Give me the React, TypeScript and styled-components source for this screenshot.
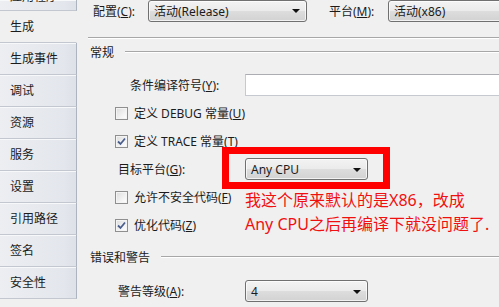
import React from 'react';
import styled, { createGlobalStyle } from 'styled-components';

const GlobalStyle = createGlobalStyle`
  html, body { margin: 0; padding: 0; background: #f0f0f0; overflow: hidden; }
  body {
    font-family: "Noto Sans", "Noto Sans CJK SC", sans-serif;
    font-size: 12px;
    color: #1b1b1b;
  }
`;

const Window = styled.div`
  display: flex;
  width: 499px;
  height: 307px;
  overflow: hidden;
  background: #f0f0f0;
`;

const TabList = styled.div`
  width: 77px;
  flex-shrink: 0;
  display: flex;
  flex-direction: column;
`;

const Tab = styled.div<{ $active?: boolean; $height?: number }>`
  height: ${(p) => p.$height ?? 31}px;
  flex-shrink: 0;
  display: flex;
  flex-direction: column;
  justify-content: center;
  overflow: hidden;
  padding-left: 10px;
  font-size: 12px;
  line-height: 16px;
  border-bottom: 1px solid #c3c8d0;
  border-right: 1px solid ${(p) => (p.$active ? 'transparent' : '#aeb4be')};
  background: ${(p) =>
    p.$active ? '#f0f0f0' : 'linear-gradient(to right, #eceef2, #e3e6ec 85%, #dde1e8)'};
  box-shadow: ${(p) => (p.$active ? 'none' : 'inset 0 1px 0 #f7f8fa')};
`;

/* the tab above "生成" is scrolled mostly out of view */
const ClippedTab = styled(Tab)`
  box-sizing: border-box;
  justify-content: flex-end;
  padding-bottom: 6px;
  line-height: 14px;
`;

const Content = styled.div`
  flex: 1;
  min-width: 0;
  display: flex;
  flex-direction: column;
  padding-left: 11px;
  overflow: hidden;
`;

const TopRow = styled.div`
  height: 23px;
  margin-top: -1px;
  display: flex;
  align-items: center;
  padding-left: 5px;
`;

const Label = styled.span<{ $indent?: number }>`
  padding-left: ${(p) => p.$indent ?? 0}px;
  white-space: nowrap;
`;

const TopLabel = styled.span<{ $width: number; $gap?: number }>`
  width: ${(p) => p.$width}px;
  padding-left: ${(p) => p.$gap ?? 0}px;
  flex-shrink: 0;
  white-space: nowrap;
  padding-top: 1px;
`;

const Divider = styled.div`
  margin-top: 15px;
  height: 1px;
  background: #a7a7a7;
  border-bottom: 1px solid #ffffff;
`;

const SectionHeader = styled.div<{ $top: number }>`
  margin-top: ${(p) => p.$top}px;
  height: 16px;
  display: flex;
  align-items: center;
  gap: 11px;
  padding-left: 2px;
  white-space: nowrap;

  &::after {
    content: '';
    flex: 1;
    height: 1px;
    background: #a7a7a7;
    border-bottom: 1px solid #ffffff;
  }
`;

const FormRow = styled.div<{ $height: number; $top?: number }>`
  height: ${(p) => p.$height}px;
  margin-top: ${(p) => p.$top ?? 0}px;
  display: grid;
  grid-template-columns: 157px 1fr;
  align-items: center;
`;

const CheckList = styled.div`
  margin-top: 3px;
  display: flex;
  flex-direction: column;
`;

const CheckRow = styled.label`
  height: 28px;
  display: flex;
  align-items: center;
  gap: 6px;
  padding-left: 27px;
  white-space: nowrap;
`;

const Box = styled.span`
  width: 11px;
  height: 11px;
  flex-shrink: 0;
  border: 1px solid #8f8f8f;
  background: linear-gradient(135deg, #dcdcdc, #f6f6f6 70%, #ffffff);
  box-shadow: inset 0 0 0 1px #f4f4f4;
  display: flex;
  align-items: center;
  justify-content: center;
`;

const ComboWrap = styled.div<{ $width?: number }>`
  position: relative;
  width: ${(p) => (p.$width ? `${p.$width}px` : 'auto')};
  flex-shrink: 0;
`;

const Combo = styled.div<{ $width?: number; $bleed?: boolean }>`
  height: 22px;
  box-sizing: border-box;
  width: ${(p) => (p.$width ? `${p.$width}px` : 'auto')};
  flex: ${(p) => (p.$bleed ? 1 : 'none')};
  margin-right: ${(p) => (p.$bleed ? '-8px' : '0')};
  display: flex;
  align-items: center;
  justify-content: space-between;
  padding: 0 6px 0 5px;
  border: 1px solid #707070;
  border-radius: 3px;
  background: linear-gradient(to bottom, #f3f3f3 0%, #ebebeb 48%, #dddddd 52%, #d2d2d2 100%);
  box-shadow: inset 0 0 0 1px rgba(255, 255, 255, 0.7);
  white-space: nowrap;
`;

const Arrow = styled.span`
  width: 0;
  height: 0;
  border-left: 4px solid transparent;
  border-right: 4px solid transparent;
  border-top: 4px solid #111;
  margin-top: 1px;
`;

const TextInput = styled.div`
  height: 22px;
  box-sizing: border-box;
  margin-right: -6px;
  background: #ffffff;
  border: 1px solid #c6c9cf;
  border-top-color: #abadb3;
`;

const RedFrame = styled.div`
  position: absolute;
  top: -11px;
  left: -23px;
  right: -22px;
  bottom: -9px;
  border: 7px solid #ff0000;
  pointer-events: none;
`;

const Note = styled.div`
  position: absolute;
  top: 30px;
  left: 0;
  width: 260px;
  font-size: 16px;
  line-height: 24px;
  color: #f01010;
  white-space: nowrap;
`;

const Check = () => (
  <svg width="9" height="9" viewBox="0 0 9 9">
    <path d="M1 4.5 L3.5 7 L8 1.5" fill="none" stroke="#4a5e8e" strokeWidth="1.8" />
  </svg>
);

const CheckBox: React.FC<{ checked?: boolean; children: React.ReactNode }> = ({ checked, children }) => (
  <CheckRow>
    <Box>{checked && <Check />}</Box>
    <span>{children}</span>
  </CheckRow>
);

const tabs = ['生成事件', '调试', '资源', '服务', '设置', '引用路径', '签名', '安全性'];

export default function App() {
  return (
    <Window>
      <GlobalStyle />
      <TabList>
        <ClippedTab $height={11}>应用程序</ClippedTab>
        <Tab $active>生成</Tab>
        {tabs.map((t) => (
          <Tab key={t}>{t}</Tab>
        ))}
      </TabList>
      <Content>
        <TopRow>
          <TopLabel $width={55}>配置(<u>C</u>):</TopLabel>
          <Combo $width={159}>
            <span>活动(Release)</span>
            <Arrow />
          </Combo>
          <TopLabel $width={59} $gap={22}>平台(<u>M</u>):</TopLabel>
          <Combo $bleed>
            <span>活动(x86)</span>
          </Combo>
        </TopRow>
        <Divider />
        <SectionHeader $top={5}>常规</SectionHeader>
        <FormRow $height={22} $top={14}>
          <Label $indent={42}>条件编译符号(<u>Y</u>):</Label>
          <TextInput />
        </FormRow>
        <CheckList>
          <CheckBox>定义 DEBUG 常量(<u>U</u>)</CheckBox>
          <CheckBox checked>定义 TRACE 常量(<u>T</u>)</CheckBox>
        </CheckList>
        <FormRow $height={28}>
          <Label $indent={30}>目标平台(<u>G</u>):</Label>
          <ComboWrap $width={123}>
            <Combo $width={123}>
              <span>Any CPU</span>
              <Arrow />
            </Combo>
            <RedFrame />
            <Note>
              我这个原来默认的是X86，改成
              <br />
              Any CPU之后再编译下就没问题了.
            </Note>
          </ComboWrap>
        </FormRow>
        <CheckBox>允许不安全代码(<u>F</u>)</CheckBox>
        <CheckBox checked>优化代码(<u>Z</u>)</CheckBox>
        <SectionHeader $top={10}>错误和警告</SectionHeader>
        <FormRow $height={22} $top={15}>
          <Label $indent={30}>警告等级(<u>A</u>):</Label>
          <ComboWrap $width={123}>
            <Combo $width={123}>
              <span>4</span>
              <Arrow />
            </Combo>
          </ComboWrap>
        </FormRow>
      </Content>
    </Window>
  );
}
